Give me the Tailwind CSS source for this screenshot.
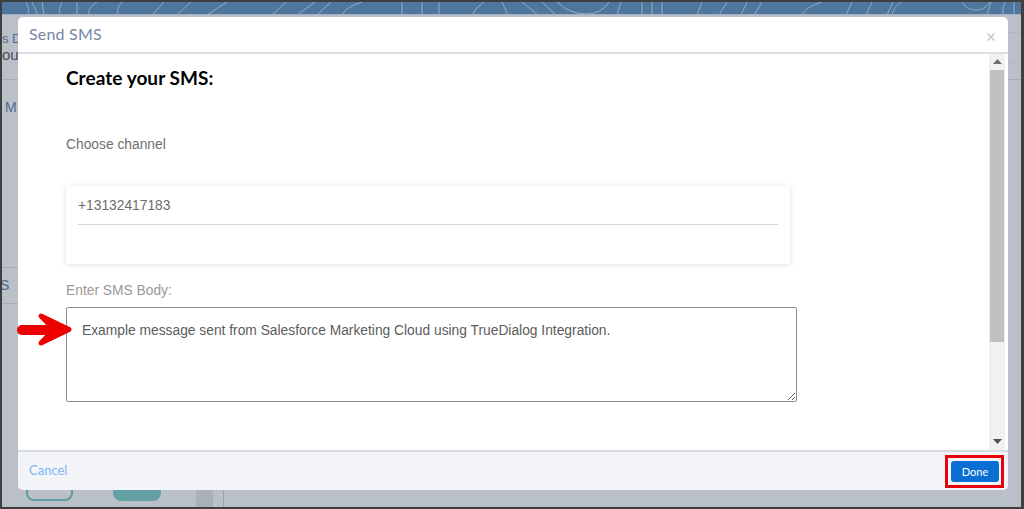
<!DOCTYPE html>
<html><head><meta charset="utf-8"><script src="https://cdn.jsdelivr.net/npm/@tailwindcss/browser@4"></script></head>
<body class="m-0 overflow-hidden">
<div class="relative w-[1024px] h-[509px] overflow-hidden bg-[#b9c0c8] border-2 border-r-[3px] border-[#3f3f3f] font-['Liberation_Sans',sans-serif]">
  <!-- backdrop -->
  <div class="h-[13px] bg-[#4f769d] border-b border-[#9fb0c2] overflow-hidden">
    <svg width="1020" height="13" fill="none" stroke="#93adc6" stroke-width="1"><path d="M24 0q4 6 2 13M30 0l6 13M40 0l2 13M60 0q-4 6-2 13M75 0v13M95 0q-10 6-8 13M120 0q-6 6-4 13M150 13l12-13M175 13l14-13M205 13l20-13M270 13l14-13M295 13l18-13M315 13l14-13M340 13q4-8 20-13M400 0v13M420 0v13M437 0v13M470 13q4-8 12-13M500 0l6 13M520 0l16 13M540 0l14 13M555 0q12 12 30 12q14 0 22-12M615 13l4-13M640 0v13M650 0v13M660 0v13M700 0l-5 13M725 0l-8 13M745 0l-6 13M760 0l-8 13M800 13q3-8 20-13M850 0l-6 13M870 0l-6 13M885 13l6-13M900 0q-8 4-10 13M960 0q5 9 16 8q6 0 12-8M985 13l4-13M1003 0q-3 6-2 13M1012 0v13"/></svg>
  </div>
  <div class="absolute left-0 top-[29px] text-[13px] leading-4 text-[#52688c]">s D</div>
  <div class="absolute left-0 top-[45px] text-[15px] leading-4 text-[#46505c]">ou</div>
  <div class="absolute left-0 top-[77px] w-4 h-px bg-[#a5acb5]"></div>
  <div class="absolute left-[3px] top-[97px] text-[14px] leading-4 text-[#52688c]">M</div>
  <div class="absolute left-0 top-[265px] w-4 h-px bg-[#a5acb5]"></div>
  <div class="absolute left-0 top-[301px] w-4 h-px bg-[#a5acb5]"></div>
  <div class="absolute -left-[2px] top-[275px] text-[14px] leading-4 text-[#52688c]">S</div>
  <div class="absolute right-0 top-[30px] w-[14px] h-[31px] border border-r-0 border-[#b0b7bf] rounded-l"></div>
  <div class="absolute right-0 top-[77px] w-[14px] h-px bg-[#a5acb5]"></div>
  <div class="absolute left-[24px] top-[487px] w-[47px] h-[12px] border-2 border-t-0 border-[#5f9ea0] rounded-b-lg"></div>
  <div class="absolute left-[111px] top-[487px] w-[48px] h-[12px] bg-[#64a0a3] rounded-b-lg"></div>
  <div class="absolute left-[194px] top-[487px] w-[17px] h-[20px] bg-[#a9b0b8]"></div>
  <div class="absolute left-[221px] top-[487px] w-px h-[20px] bg-[#9aa1a9]"></div>

  <!-- modal -->
  <div class="absolute left-[16px] top-[15px] w-[990px] h-[473px] flex flex-col bg-white rounded-[5px] overflow-hidden">
    <div class="h-[37px] shrink-0 flex items-center justify-between pl-[11px] pr-[13px] border-b-2 border-[#dcdee6]">
      <span class="font-['Lato',sans-serif] text-[16px] text-[#7686a6] tracking-[0.2px] -mt-[2px]">Send SMS</span>
      <svg width="8" height="8" viewBox="0 0 8 8" class="mt-[5px]" stroke="#c4c4c4" stroke-width="1.3"><path d="M0.5 0.5l7 7M7.5 0.5l-7 7"/></svg>
    </div>
    <div class="flex-1 flex min-h-0">
      <div class="flex-1 pl-[48px] flex flex-col items-start">
        <h1 class="font-['Lato',sans-serif] font-bold text-[19px] tracking-[0.05px] leading-6 text-black mt-[12px]">Create your SMS:</h1>
        <p class="text-[13.8px] leading-4 text-[#707070] mt-[47px]">Choose channel</p>
        <div class="w-[724px] h-[78px] mt-[33px] pt-[12px] px-[12px] bg-white shadow-[0_1px_6px_rgba(0,0,0,0.13)]">
          <div class="h-[27px] text-[13.8px] leading-4 text-[#6c6c6c] border-b border-[#d5d5d5]">+13132417183</div>
        </div>
        <p class="text-[13.8px] leading-4 text-[#999] mt-[19px]">Enter SMS Body:</p>
        <textarea class="w-[731px] h-[95px] mt-[8px] pl-[15px] pt-[15px] text-[13.8px] leading-4 text-[#5c5c5c] bg-white border border-[#8c8c8c] rounded-[2px] outline-none resize-y overflow-hidden">Example message sent from Salesforce Marketing Cloud using TrueDialog Integration.</textarea>
      </div>
      <div class="w-[16px] mr-[3px] bg-[#f1f1f1] flex flex-col items-center pt-[2px] pb-[4px]">
        <svg width="9" height="12" viewBox="0 0 9 12" class="shrink-0"><path d="M4.5 3L9 8H0z" fill="#6e6e6e"/></svg>
        <div class="w-[14px] h-[272px] bg-[#c1c1c1] mt-[2px]"></div>
        <div class="flex-1"></div>
        <svg width="9" height="12" viewBox="0 0 9 12" class="shrink-0"><path d="M4.5 10L0 5h9z" fill="#505050"/></svg>
      </div>
    </div>
    <div class="h-[40px] shrink-0 flex items-center justify-between pl-[11px] pr-[9px] bg-[#f3f4f8] border-t-2 border-[#d9dbe2]">
      <span class="font-['Lato',sans-serif] text-[13px] text-[#7ab8f7]">Cancel</span>
      <button class="w-[48px] h-[21px] bg-[#0b6ed3] rounded-[3px] text-white text-[11px] leading-none font-['Lato',sans-serif]">Done</button>
    </div>
  </div>

  <!-- annotations -->
  <div class="absolute left-[943px] top-[453px] w-[59px] h-[33px] border-[3px] border-[#e8000b]"></div>
  <svg class="absolute left-[14px] top-[310px]" width="60" height="38" viewBox="0 0 60 38" fill="#ec0000" stroke="#ec0000" stroke-linecap="round" stroke-linejoin="round"><path d="M6 18H40" fill="none" stroke-width="10"/><path d="M25 4L53 17.5L25 31L38 17.5Z" stroke-width="5"/></svg>
</div>
</body></html>
